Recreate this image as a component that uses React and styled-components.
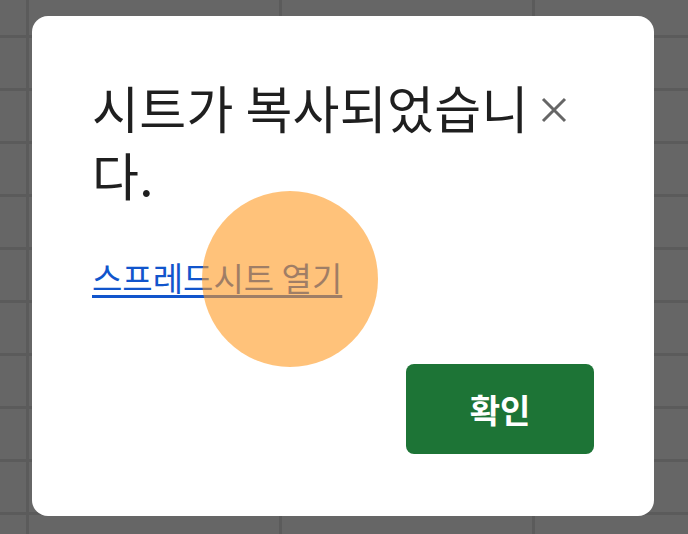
import React from "react";
import styled, { createGlobalStyle } from "styled-components";

const GlobalStyle = createGlobalStyle`
  html, body {
    margin: 0;
    padding: 0;
  }
  body {
    font-family: "Noto Sans CJK KR", "Noto Sans", sans-serif;
    background-color: #666666;
  }
`;

const App = () => {
  return (
    <>
      <GlobalStyle />
      <Page>
        <Dialog role="dialog" aria-labelledby="copy-title">
          <Header>
            <Title id="copy-title">시트가 복사되었습니다.</Title>
            <CloseButton aria-label="닫기">
              <svg width="26" height="26" viewBox="0 0 26 26">
                <path
                  d="M2 2 L24 24 M24 2 L2 24"
                  stroke="#666666"
                  strokeWidth="3"
                  fill="none"
                />
              </svg>
            </CloseButton>
          </Header>
          <OpenLink href="#">스프레드시트 열기</OpenLink>
          <Footer>
            <ConfirmButton>확인</ConfirmButton>
          </Footer>
        </Dialog>
        <TouchRipple />
      </Page>
    </>
  );
};

export default App;

const Page = styled.div`
  position: relative;
  box-sizing: border-box;
  width: 688px;
  height: 534px;
  padding: 16px 34px 18px 32px;
  background-color: #666666;
  background-image: linear-gradient(
      to right,
      #5b5b5b 0,
      #5b5b5b 3px,
      transparent 3px
    ),
    linear-gradient(to bottom, #5b5b5b 0, #5b5b5b 3px, transparent 3px);
  background-size: 253px 53px;
  background-position: 26px 35px;
`;

const Dialog = styled.div`
  box-sizing: border-box;
  width: 622px;
  height: 500px;
  padding: 58px 60px 62px;
  background: #ffffff;
  border-radius: 16px;
  display: flex;
  flex-direction: column;
`;

const Header = styled.div`
  display: flex;
  align-items: flex-start;
`;

const Title = styled.h1`
  flex: 1;
  margin: 0;
  font-size: 51px;
  font-weight: 400;
  line-height: 67px;
  color: #1f1f1f;
  letter-spacing: 0.3px;
`;

const CloseButton = styled.button`
  flex: none;
  width: 44px;
  height: 44px;
  margin: 14px 18px 0 0;
  padding: 0;
  border: none;
  background: transparent;
  display: flex;
  align-items: center;
  justify-content: center;
  cursor: pointer;
`;

const OpenLink = styled.a`
  align-self: flex-start;
  margin-top: 48px;
  font-size: 33px;
  line-height: 42px;
  color: #1155cc;
  text-decoration: underline;
  text-underline-offset: 4px;
`;

const Footer = styled.div`
  margin-top: auto;
  display: flex;
  justify-content: flex-end;
`;

const ConfirmButton = styled.button`
  width: 188px;
  height: 90px;
  border: none;
  border-radius: 8px;
  background: #1d7436;
  color: #ffffff;
  font-family: "Noto Sans CJK KR", "Noto Sans", sans-serif;
  font-size: 33px;
  font-weight: 700;
  cursor: pointer;
`;

const TouchRipple = styled.div`
  position: absolute;
  left: 202px;
  top: 191px;
  width: 176px;
  height: 176px;
  border-radius: 50%;
  background: rgba(255, 153, 33, 0.6);
  pointer-events: none;
`;
